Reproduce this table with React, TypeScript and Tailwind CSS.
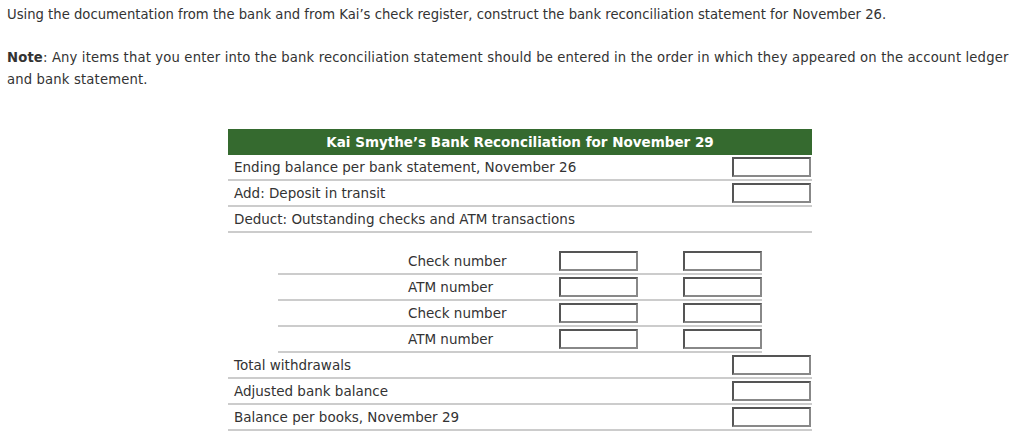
import React from "react";

const Box = () => (
  <div className="w-[79px] h-[20px] border-2 border-t-[#555] border-l-[#555] border-r-[#888] border-b-[#888] bg-white" />
);

const MainRow = ({ label, input = true }: { label: string; input?: boolean }) => (
  <div className="flex items-center justify-between h-[26px] border-b-2 border-[#cccccc] pl-[6px] pr-[1px]">
    <span>{label}</span>
    {input && <Box />}
  </div>
);

const SubRow = ({ label }: { label: string }) => (
  <div className="mx-[50px] flex items-center h-[26px] border-b-2 border-[#cccccc]">
    <span className="w-[281px] pl-[130px]">{label}</span>
    <Box />
    <div className="w-[45px]" />
    <Box />
  </div>
);

export default function App() {
  return (
    <div
      className="w-[1024px] h-[443px] bg-white text-[#333333] text-[13.2px] leading-[22px] pl-[7px] pr-[3px] pt-[4px]"
      style={{ fontFamily: '"DejaVu Sans", Verdana, sans-serif' }}
    >
      <p>
        Using the documentation from the bank and from Kai’s check register, construct the bank reconciliation statement for November 26.
      </p>
      <p className="mt-[21px] tracking-[0.15px]">
        <b>Note</b>: Any items that you enter into the bank reconciliation statement should be entered in the order in which they appeared on the account ledger
        <br />
        and bank statement.
      </p>
      <div className="ml-[221px] mt-[38px] w-[584px] text-[13.5px]">
        <div className="h-[26px] bg-[#356a2f] text-white font-bold flex items-center justify-center">
          Kai Smythe’s Bank Reconciliation for November 29
        </div>
        <MainRow label="Ending balance per bank statement, November 26" />
        <MainRow label="Add: Deposit in transit" />
        <MainRow label="Deduct: Outstanding checks and ATM transactions" input={false} />
        <div className="h-[16px]" />
        <SubRow label="Check number" />
        <SubRow label="ATM number" />
        <SubRow label="Check number" />
        <SubRow label="ATM number" />
        <MainRow label="Total withdrawals" />
        <MainRow label="Adjusted bank balance" />
        <MainRow label="Balance per books, November 29" />
      </div>
    </div>
  );
}
